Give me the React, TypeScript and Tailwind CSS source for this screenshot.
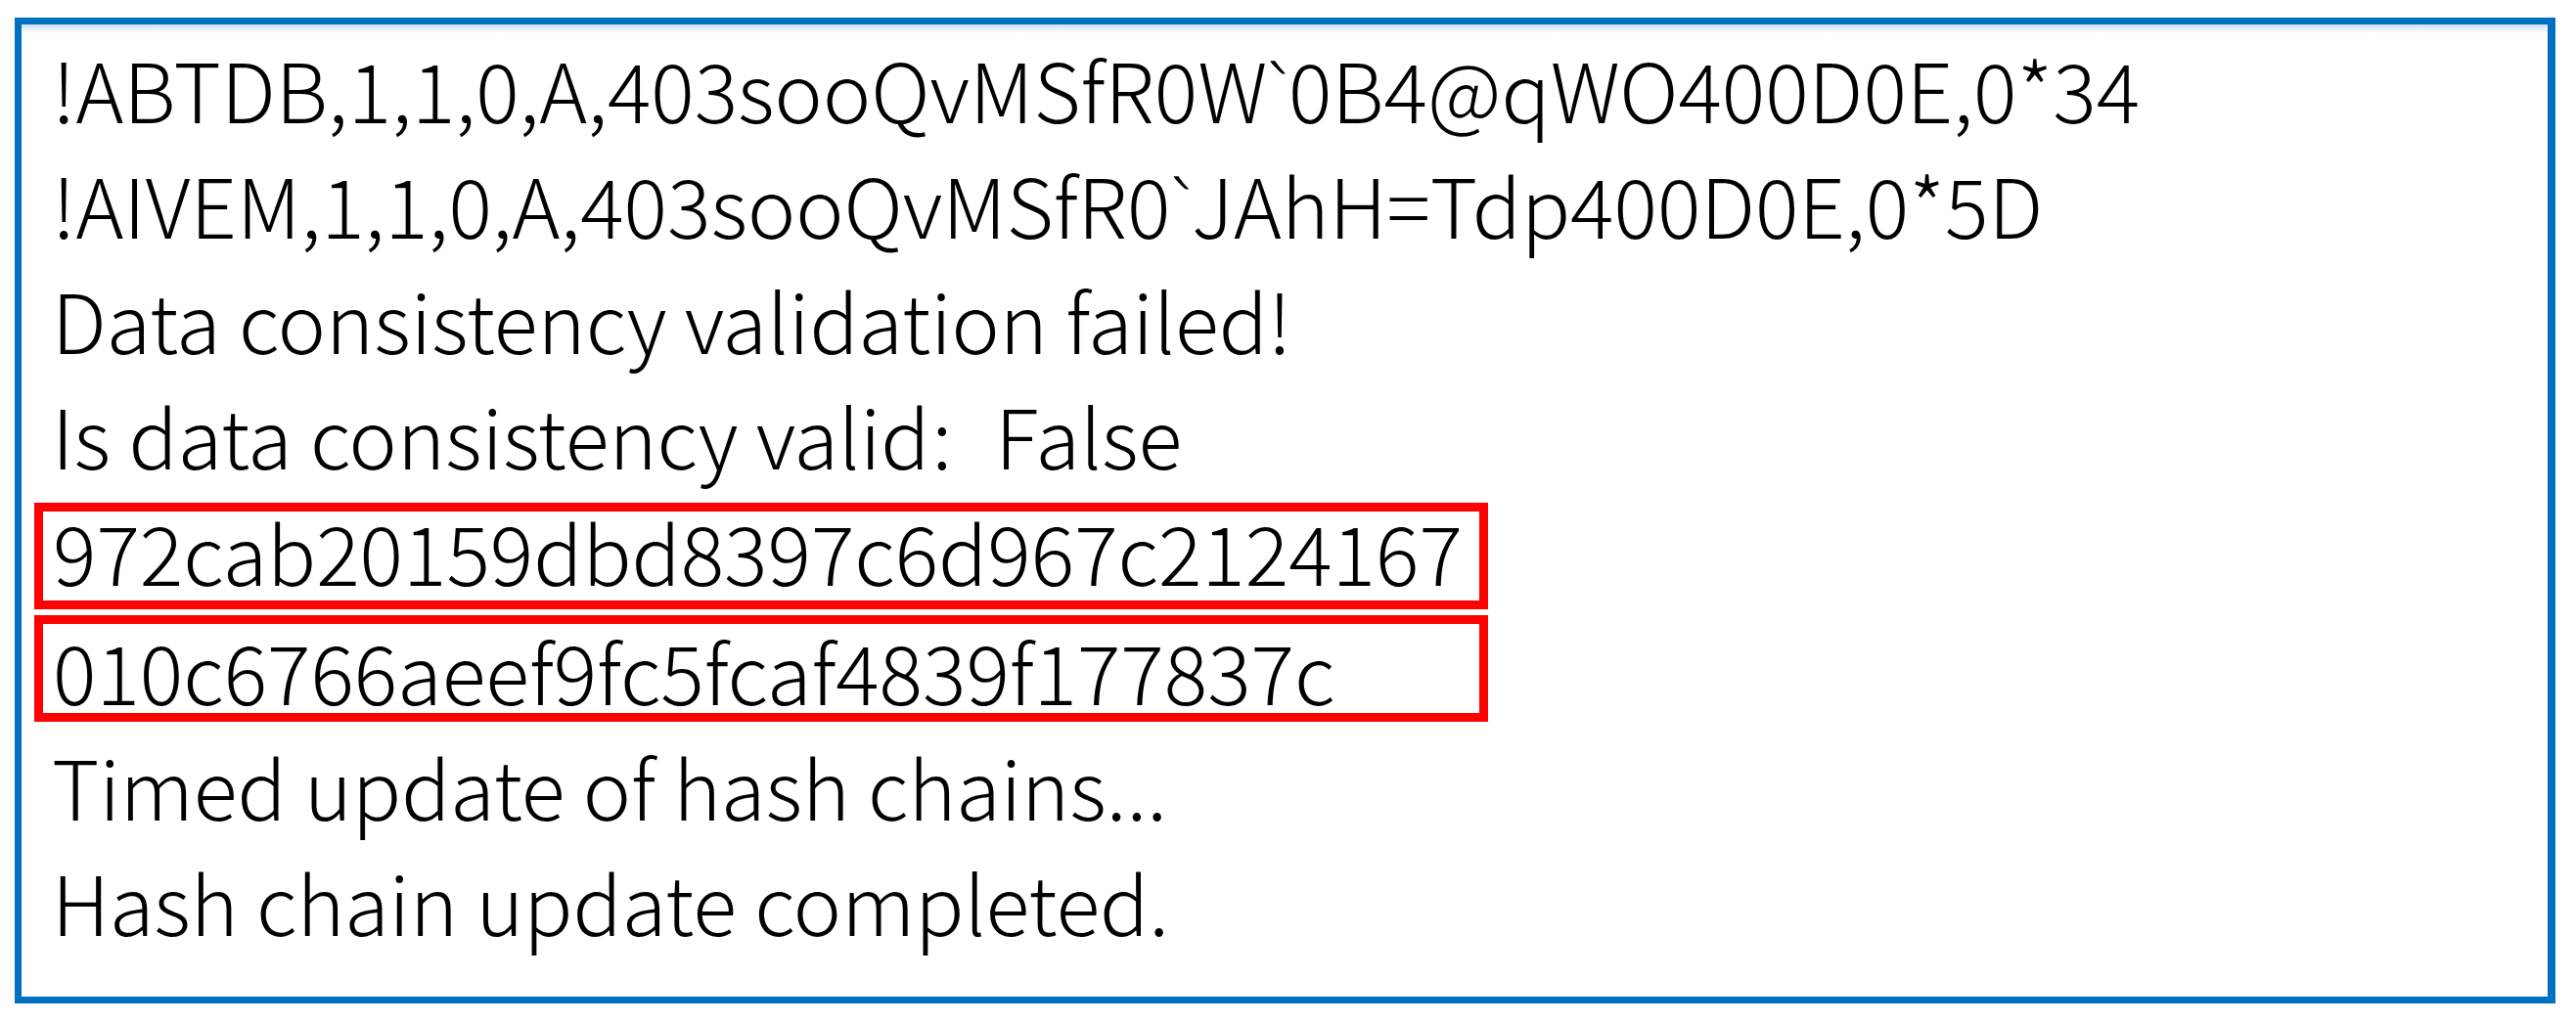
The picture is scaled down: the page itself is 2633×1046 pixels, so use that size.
import React from "react";

const lineCls = "h-[118px] leading-[118px] whitespace-pre";
const tick = "font-['Open_Sans']";

export default function App() {
  return (
    <div className="w-[2633px] h-[1046px] bg-white overflow-hidden pt-[18px] pl-[15px]">
      <div
        className="w-[2597px] h-[1008px] border-[#0070c0] border-l-[7px] border-t-[7px] border-r-[8px] border-b-[7px] bg-[linear-gradient(to_bottom,#cfdff5_0px,#e6eefa_4px,#ffffff_9px)] pt-[6px] text-black text-[83px] font-light"
        style={{ fontFamily: '"Noto Sans CJK SC", "Open Sans", sans-serif' }}
      >
        <div className="pl-[31px]">
          <div className={lineCls}>
            !ABTDB,1,1,0,A,403sooQvMSfR0W<span className={tick}>`</span>0B4@qWO400D0E,0*34
          </div>
          <div className={lineCls}>
            !AIVEM,1,1,0,A,403sooQvMSfR0<span className={tick}>`</span>JAhH=Tdp400D0E,0*5D
          </div>
          <div className={lineCls}>Data consistency validation failed!</div>
          <div className={lineCls}>
            Is data consistency valid<span className="ml-[2px]">:</span>
            <span className="ml-[44px]">False</span>
          </div>
        </div>
        <div className="ml-[13px] mt-[11px] w-[1486px] border-[9px] border-[#ff0000] pl-[10px] pt-0 pb-[11px] leading-[80px] whitespace-pre">
          972cab20159dbd8397c6d967c2124167
        </div>
        <div className="ml-[13px] mt-[6px] w-[1486px] border-[9px] border-[#ff0000] pl-[10px] pt-[7px] pb-[4px] leading-[80px] whitespace-pre">
          010c6766aeef9fc5fcaf4839f177837c
        </div>
        <div className="pl-[31px] mt-[6px]">
          <div className={lineCls}>Timed update of hash chains...</div>
          <div className={lineCls}>Hash chain update completed.</div>
        </div>
      </div>
    </div>
  );
}
